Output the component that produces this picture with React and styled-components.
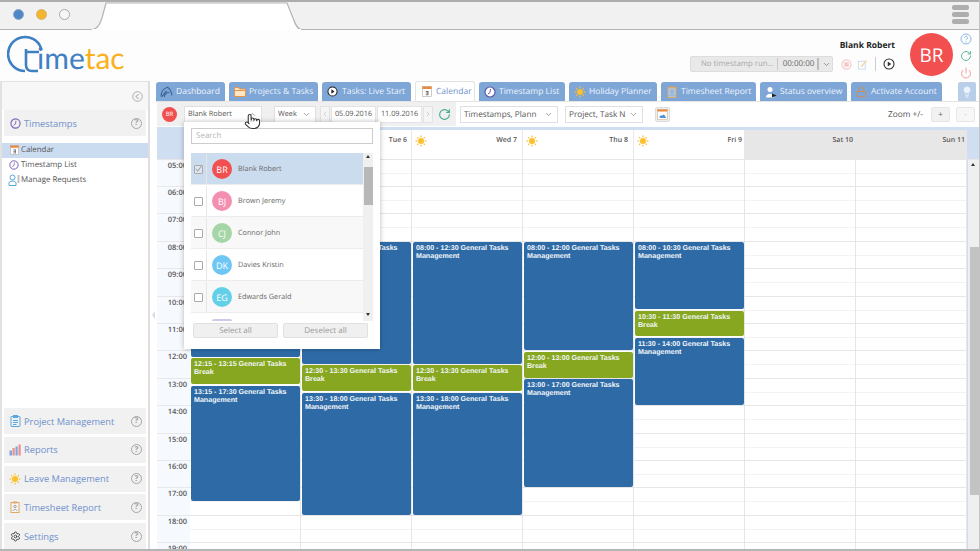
import React from 'react';
import styled, { createGlobalStyle } from 'styled-components';
import { Pointer, ChevronDown, ChevronUp, ChevronLeft, ChevronRight, RotateCw, Power, Settings, Lightbulb, Lock } from 'lucide-react';

const Global = createGlobalStyle`
  html, body { margin: 0; padding: 0; background: #fff; }
  * { box-sizing: border-box; }
  body { font-family: "Open Sans", "Liberation Sans", sans-serif; text-rendering: geometricPrecision; }
`;
const Page = styled.div`position: relative; width: 980px; height: 551px; overflow: hidden; background: #fff; display: flex; flex-direction: column; border-right: 1px solid #c4c4c4; border-bottom: 2px solid #b5b5b5;`;
const Chrome = styled.div`position: relative; height: 30px; flex: none; background: #f1f1f1; border-top: 2px solid #adadad; border-bottom: 1px solid #b4b4b4; display: flex; align-items: center; justify-content: space-between; padding: 0 10px 2px 13px;`;
const Dots = styled.div`display: flex; gap: 12px; position: relative; z-index: 1;`;
const Dot = styled.span`width: 11px; height: 11px; border-radius: 50%; background: ${p => p.$c}; border: 1px solid ${p => p.$b};`;
const TabShape = styled.svg`position: absolute; left: 88px; top: -2px;`;
const Burger = styled.div`display: flex; flex-direction: column; gap: 2px;`;
const BurgerBar = styled.span`width: 17px; height: 5px; border-radius: 2px; background: #aeaeae;`;
const Header = styled.header`height: 51px; flex: none; display: flex; align-items: flex-start; background: #fdfdfd; position: relative;`;
const Logo = styled.div`position: relative; width: 125px; height: 40px; margin: 5px 0 0 7px; flex: none;`;
const LogoMark = styled.svg`position: absolute; left: 0; top: 0;`;
const LogoText = styled.div`position: absolute; left: 30px; top: 5px; font: 400 30px/36px "Lato", sans-serif; color: #3f80c2; white-space: nowrap;`;
const LogoTac = styled.span`color: #fbb01e;`;
const HeaderRight = styled.div`margin-left: auto; display: flex; align-items: flex-start;`;
const UserBlock = styled.div`display: flex; flex-direction: column; align-items: flex-end; margin-right: 15px; padding-top: 10px;`;
const UserName = styled.div`font-size: 8.5px; font-weight: 700; color: #222; line-height: 11px;`;
const TimerRow = styled.div`display: flex; align-items: center; margin-top: 5px; height: 16px; width: 205px;`;
const TimerBox = styled.div`width: 144px; height: 16px; background: #e9e9e9; border: 1px solid #ddd; border-radius: 2px; display: flex; align-items: center; font-size: 7.8px; color: #a8a8a8; padding-left: 10px; white-space: nowrap;`;
const TimerTime = styled.span`color: #666; border-left: 1px solid #c8c8c8; border-right: 2px solid #bbb; padding: 0 3px 0 5px; margin-left: 3px; line-height: 12px; font-size: 8px;`;
const TimerActions = styled.div`display: flex; align-items: center; gap: 5px; margin-left: 8px; height: 16px;`;
const Sep = styled.span`width: 1px; height: 14px; background: #ccc; margin: 0 2px;`;
const BigAvatar = styled.div`width: 43px; height: 43px; margin-top: 3px; border-radius: 50%; background: #f25050; color: #fff; font-size: 19px; display: flex; align-items: center; justify-content: center; flex: none;`;
const SideIcons = styled.div`width: 26px; display: flex; flex-direction: column; align-items: center; gap: 5px; padding: 3px 0 0; flex: none;`;
const Body = styled.div`flex: 1; display: flex; min-height: 0;`;
const Sidebar = styled.aside`width: 150px; flex: none; border-right: 2px solid #dedede; border-left: 2px solid #e2e2e2; border-top: 1px solid #e2e2e2; display: flex; flex-direction: column; background: #fff;`;
const Collapse = styled.div`height: 28px; flex: none; background: #f7f7f7; display: flex; align-items: center; justify-content: flex-end; padding-right: 5px;`;
const SideSection = styled.div`height: 26px; flex: none; margin: 0 2px 2.75px 2px; background: #f1f1f1; display: flex; align-items: center; gap: 3px; padding: 0 4px 0 5px; color: #6f90cc; font-size: 9.3px; &:last-child { margin-bottom: 0; }`;
const SideIconSlot = styled.span`width: 12px; flex: none; display: flex; align-items: center; justify-content: center;`;
const SideLabel = styled.span`flex: 1; white-space: nowrap;`;
const SideList = styled.div`margin: 4px 0 0; flex: 1;`;
const SideItem = styled.div`height: 15px; display: flex; align-items: center; gap: 1px; padding-left: 6px; font-size: 7.9px; color: #555; background: ${p => p.$active ? '#ccdcf0' : 'transparent'}; white-space: nowrap;`;
const HelpCircle = styled.span`width: 11px; height: 11px; border: 1.3px solid #a5a5a5; border-radius: 50%; color: #a0a0a0; font-size: 8px; font-weight: 700; display: flex; align-items: center; justify-content: center; flex: none; line-height: 1;`;
const Main = styled.main`flex: 1; min-width: 0; display: flex; flex-direction: column; padding-left: 6px; position: relative;`;
const Tabs = styled.nav`height: 20px; flex: none; display: flex; gap: 4px; align-items: flex-end; position: relative;`;
const Tab = styled.div`height: ${p => p.$active ? 20 : 19}px; width: ${p => p.$w}px; flex: none; border-radius: 3px 3px 0 0; background: ${p => p.$active ? '#fff' : '#7ea6d7'}; border: ${p => p.$active ? '1px solid #e2e2e2' : 'none'}; border-bottom: none; color: ${p => p.$active ? '#6f90cc' : '#eef4fb'}; font-size: 8.5px; display: flex; align-items: center; gap: 4px; padding-left: 5px; white-space: nowrap;`;
const TabIcon = styled.span`width: 11px; flex: none; display: flex; align-items: center; justify-content: center;`;
const BulbTab = styled.div`width: 18px; height: 19px; margin-left: 12px; background: #b9cfe9; border-radius: 2px 2px 0 0; display: flex; align-items: center; justify-content: center;`;
const Toolbar = styled.div`height: 26px; flex: none; display: flex; align-items: center; padding: 0 4px 1px 1px; border-top: 1px solid #e4e4e4; position: relative; background: #fff;`;
const ToolGroup = styled.div`display: flex; align-items: center; height: 24px; background: #f0f0f0; padding: 0 3px 0 5px; width: 299px; flex: none;`;
const SmallAvatar = styled.div`width: 15px; height: 15px; border-radius: 50%; background: #f25050; color: #fff; font-size: 6px; display: flex; align-items: center; justify-content: center; flex: none; margin-right: 7px;`;
const Select = styled.div`width: ${p => p.$w}px; height: 17px; flex: none; margin-left: ${p => p.$ml || 0}px; background: #fff; border: 1px solid #e0e0e0; display: flex; align-items: center; justify-content: space-between; padding: 0 4px 0 3px; font-size: ${p => p.$fs || 7.3}px; color: #555; white-space: nowrap; overflow: hidden;`;
const SelectText = styled.span`overflow: hidden; flex: 1;`;
const ArrowBtn = styled.div`width: 10px; height: 17px; flex: none; margin: 0 1px 0 ${p => p.$ml || 1}px; background: #f5f5f5; border: 1px solid #e2e2e2; display: flex; align-items: center; justify-content: center;`;
const DateBox = styled.div`width: 45px; height: 17px; flex: none; margin-left: ${p => p.$ml || 0}px; background: #fff; border: 1px solid #e4e4e4; font-size: 7.3px; color: #555; display: flex; align-items: center; justify-content: center;`;
const RefreshSlot = styled.span`margin-left: 4px; display: flex;`;
const ExportBtn = styled.div`width: 15px; height: 15px; margin-left: 12px; background: #eee; border: 1px solid #ddd; border-radius: 2px; display: flex; align-items: center; justify-content: center;`;
const ZoomLabel = styled.div`margin-left: auto; font-size: 8.3px; color: #555; margin-right: 8px;`;
const ZoomBtn = styled.div`width: 19px; height: 15px; background: ${p => p.$off ? '#f7f7f7' : '#f1f1f1'}; border: 1px solid #e6e6e6; border-radius: 2px; margin-left: ${p => p.$ml || 0}px; color: ${p => p.$off ? '#bbb' : '#666'}; font-size: 8px; display: flex; align-items: center; justify-content: center;`;
const Calendar = styled.div`flex: 1; min-height: 0; display: flex; flex-direction: column; border-top: 3px solid #cfdff1; margin-left: 1px; margin-right: -5px;`;
const DayHead = styled.div`height: 29.5px; flex: none; display: flex; border-bottom: 1px solid #e6e6e6;`;
const CornerCell = styled.div`width: 33px; flex: none; background: #cfdff1;`;
const HeadCell = styled.div`width: 111px; flex: none; border-right: 1px solid #e8e8e8; background: ${p => p.$off ? '#e7e7e7' : '#fff'}; display: flex; justify-content: space-between; padding: 5px ${p => p.$pr}px 0 3px; font-size: 7px; line-height: 11px; font-weight: 600; color: #555;`;
const HeadFill = styled.div`flex: 1; background: #cfdff1;`;
const GridWrap = styled.div`flex: 1; min-height: 0; display: flex; overflow: hidden;`;
const TimeCol = styled.div`width: 33px; flex: none; background: #f6f9fe;`;
const TimeCell = styled.div`height: 27.42px; border-bottom: 1px solid #e8e8e8; text-align: right; padding: 1px 3px 0 0; font-size: 7.5px; font-weight: 600; color: #555; line-height: 11px;`;
const DayCol = styled.div`position: relative; width: 111px; flex: none; border-right: 1px solid #e6e6e6;`;
const Slot = styled.div`height: 27.42px; border-bottom: 1px solid #e6e6e6; background: linear-gradient(#f3f3f3, #f3f3f3) 0 13px / 100% 1px no-repeat;`;
const Event = styled.div`position: absolute; left: 1px; right: 0; background: ${p => p.$break ? '#86a71f' : '#2e6ba6'}; border-radius: 2px; color: #f4f7fb; font: 700 7.1px/8px "Liberation Sans", sans-serif; padding: 2px 3px; white-space: pre-line; overflow: hidden;`;
const Scrollbar = styled.div`width: 12px; flex: none; background: #efefef; border-left: 1px solid #cfdff1; position: relative;`;
const ScrollThumb = styled.div`position: absolute; left: 2px; right: 0; top: 87px; height: 248px; background: #c3c3c3;`;
const Tri = styled.span`position: absolute; left: 3px; top: ${p => p.$top}px; width: 0; height: 0; border-left: 2.5px solid transparent; border-right: 2.5px solid transparent; border-${p => p.$down ? 'top' : 'bottom'}: 3px solid #333;`;
const Dropdown = styled.div`position: absolute; left: 184px; top: 122px; width: 196px; height: 227px; background: #fff; box-shadow: 0 0 5px rgba(0,0,0,.28); padding: 6px 7px 0 7px; z-index: 5; display: flex; flex-direction: column;`;
const SearchBox = styled.div`height: 16px; flex: none; border: 1px solid #ccc; padding-left: 4px; font-size: 8px; line-height: 14px; color: #b5b5b5;`;
const ListWrap = styled.div`height: 168px; flex: none; margin-top: 9px; position: relative; overflow: hidden; padding-right: 10px;`;
const PersonRow = styled.div`height: 32px; padding-top: 1px; display: flex; align-items: center; background: ${p => p.$sel ? '#ccdcef' : (p.$alt ? '#f8f8f8' : '#fff')}; border-bottom: 1px solid #ececec; font-size: 7.25px; color: #666;`;
const CheckCell = styled.div`width: 16px; height: 100%; flex: none; border-right: 1px solid #e6e6e6; display: flex; align-items: center; justify-content: center; margin-right: 5px;`;
const Check = styled.span`width: 9px; height: 9px; border: 1px solid #aaa; border-radius: 1px; background: ${p => p.$on ? '#dde4ee' : '#fff'}; display: flex; align-items: center; justify-content: center;`;
const PersonAvatar = styled.span`width: 20px; height: 20px; border-radius: 50%; background: ${p => p.$c}; color: #fff; font-size: 9px; display: flex; align-items: center; justify-content: center; margin-right: 6px; flex: none;`;
const ListScroll = styled.div`position: absolute; right: 0; top: 0; width: 10px; height: 100%; background: #f0f0f0;`;
const ListThumb = styled.div`position: absolute; left: 1px; right: 0; top: 14px; height: 38px; background: #b8b8b8;`;
const PartialRow = styled.div`height: 8px; padding-left: 21px; display: flex; align-items: flex-end; overflow: hidden;`;
const PartialAvatar = styled.span`width: 20px; height: 2px; border-radius: 10px 10px 0 0; background: #cfc8e6;`;
const DropActions = styled.div`display: flex; justify-content: space-between; padding: 2px 5px 0 2px;`;
const DropBtn = styled.div`width: 85px; height: 15px; background: #f0f0f0; border: 1px solid #e0e0e0; border-radius: 2px; font-size: 8px; color: #999; display: flex; align-items: center; justify-content: center;`;
const Cursor = styled.div`position: absolute; left: 244px; top: 113px; z-index: 6; line-height: 0;`;
const SideNotch = styled.span`position: absolute; left: 152px; top: 311px; width: 0; height: 0; border-top: 4px solid transparent; border-bottom: 4px solid transparent; border-right: 3px solid #dcdcdc;`;

const SunIcon = ({ s = 11 }) => (
  <svg width={s} height={s} viewBox="0 0 24 24" style={{ flex: 'none' }}>
    <circle cx="12" cy="12" r="6" fill="#fbc02d" />
    {Array.from({ length: 8 }, (_, i) => (
      <line key={i} x1="12" y1="1" x2="12" y2="4.5" stroke="#fbc02d" strokeWidth="2.4" transform={`rotate(${i * 45} 12 12)`} />
    ))}
  </svg>
);
const ClockIcon = ({ s = 11, c = '#7a63b8', fill = 'none' }) => (
  <svg width={s} height={s} viewBox="0 0 24 24" fill={fill} style={{ flex: 'none' }}>
    <circle cx="12" cy="12" r="10" stroke={c} strokeWidth="2.4" />
    <path d="M13 6l-1 7-4 3" stroke={c} strokeWidth="2" fill="none" />
  </svg>
);
const CalIcon = ({ s = 10 }) => (
  <svg width={s} height={s + 1} viewBox="0 0 20 22" style={{ flex: 'none' }}>
    <rect x="1" y="1" width="18" height="20" fill="#fff" stroke="#999" />
    <rect x="1" y="1" width="18" height="5" fill="#e9873a" />
    <rect x="7.5" y="10" width="5" height="1.6" fill="#555" />
    <rect x="11" y="10" width="1.6" height="8" fill="#555" />
    <rect x="7.5" y="13.4" width="5" height="1.4" fill="#555" />
    <rect x="7.5" y="17" width="5" height="1.4" fill="#555" />
  </svg>
);
const GaugeIcon = () => (
  <svg width="13" height="13" viewBox="0 0 24 24" fill="none" stroke="#3d6490" strokeWidth="2" style={{ flex: 'none' }}>
    <path d="M2 21A17 17 0 0 1 14 4c4 3 7 9 8 15" /><path d="M3 22l9-11M8 22a8 8 0 0 1 9-8" />
  </svg>
);
const FolderIcon = () => (
  <svg width="12" height="11" viewBox="0 0 24 22" style={{ flex: 'none' }}>
    <path d="M1 3h8l2 3h12v15H1z" fill="#fde7c7" stroke="#e8944a" strokeWidth="2" /><rect x="1" y="8" width="22" height="2" fill="#e8944a" />
  </svg>
);
const PlayCircle = ({ s = 11, c = '#222' }) => (
  <svg width={s} height={s} viewBox="0 0 24 24" fill="none" style={{ flex: 'none' }}>
    <circle cx="12" cy="12" r="10" stroke={c} strokeWidth="2.2" fill="#fff" /><path d="M9.5 7l7 5-7 5z" fill={c} />
  </svg>
);
const Clipboard = ({ c = '#e0a860', inner = '#7fa6d7', s = 12 }) => (
  <svg width={s} height={s} viewBox="0 0 24 24" fill="none" style={{ flex: 'none' }}>
    <rect x="4" y="3" width="16" height="20" fill="#fff" fillOpacity=".35" stroke={c} strokeWidth="2" />
    <rect x="8" y="1" width="8" height="4" fill={c} />
    <circle cx="12" cy="11" r="2.5" stroke={inner} strokeWidth="1.6" /><path d="M8 20c0-4 8-4 8 0" stroke={inner} strokeWidth="1.6" />
  </svg>
);
const ProjectIcon = () => (
  <svg width="11" height="12" viewBox="0 0 22 24" fill="none" stroke="#5aa6de" strokeWidth="2" style={{ flex: 'none' }}>
    <rect x="2" y="3" width="18" height="20" rx="1" /><rect x="7" y="1" width="8" height="4" fill="#5aa6de" />
    <path d="M6 11h10M6 15h10M6 19h7" />
  </svg>
);
const ReportIcon = () => (
  <svg width="12" height="12" viewBox="0 0 24 24" style={{ flex: 'none' }}>
    <rect x="1" y="13" width="5" height="10" fill="#7fa9dc" /><rect x="7" y="8" width="4.5" height="15" fill="#ef8f8f" />
    <rect x="13" y="5" width="4.5" height="18" fill="#7fa9dc" /><rect x="19" y="1" width="4.5" height="22" fill="#ef8f8f" />
  </svg>
);
const PeopleIcon = () => (
  <svg width="12" height="12" viewBox="0 0 24 24" fill="none" style={{ flex: 'none' }}>
    <circle cx="9" cy="7" r="5" stroke="#5aa6de" strokeWidth="2" /><path d="M2 23v-5c0-5 14-5 14 0v5z" stroke="#5aa6de" strokeWidth="2" />
    <path d="M19 4h4M19 8h4M19 12h4M19 16h4" stroke="#777" strokeWidth="1.8" />
  </svg>
);
const StatusIcon = () => (
  <svg width="12" height="12" viewBox="0 0 24 24" style={{ flex: 'none' }}>
    <circle cx="10" cy="7" r="5" fill="#fff" /><path d="M2 23c0-10 16-10 16 0z" fill="#fff" /><path d="M14 15l9 4-9 4z" fill="#222" />
  </svg>
);
const ExportIcon = () => (
  <svg width="11" height="11" viewBox="0 0 22 22" style={{ flex: 'none' }}>
    <rect x="1" y="1" width="20" height="20" fill="#fff" stroke="#c9a37c" /><rect x="1" y="1" width="20" height="4" fill="#e9873a" />
    <path d="M6 18c-3-3 1-6 4-5 2-3 7-1 6 2 3 0 3 3 1 3z" fill="#4f93cf" />
  </svg>
);

const tabs = [
  ['Dashboard', 69, <GaugeIcon />], ['Projects & Tasks', 89, <FolderIcon />], ['Tasks: Live Start', 89, <PlayCircle />],
  ['Calendar', 60, <CalIcon s={10} />, true], ['Timestamp List', 86, <ClockIcon s={12} c="#5f5aa8" fill="#fff" />],
  ['Holiday Planner', 88, <SunIcon s={12} />], ['Timesheet Report', 95, <Clipboard />], ['Status overview', 87, <StatusIcon />],
  ['Activate Account', 91, <Lock size={12} color="#d98a4a" strokeWidth={2} />],
];
const bottomSections = [
  ['Project Management', <ProjectIcon />], ['Reports', <ReportIcon />], ['Leave Management', <SunIcon s={12} />],
  ['Timesheet Report', <Clipboard c="#e0a860" inner="#8a8a8a" />], ['Settings', <Settings size={11} color="#444" strokeWidth={2} />],
];
const hours = ['05:00','06:00','07:00','08:00','09:00','10:00','11:00','12:00','13:00','14:00','15:00','16:00','17:00','18:00','19:00'];
const HOUR = 27.42;
const ev = (from, to, task) => ({ from, to, task, isBreak: task === 'Break' });
const fmt = h => `${String(Math.floor(h)).padStart(2, '0')}:${String(Math.round((h % 1) * 60)).padStart(2, '0')}`;
const M = 'Management', B = 'Break';
const days = [
  { id: 'mon', pr: 4, sun: true, events: [ev(8, 12.25, M), ev(12.25, 13.25, B), ev(13.25, 17.5, M)], hiddenFirst: true },
  { id: 'tue', pr: 4, head: 'Tue 6', sun: true, events: [ev(8, 12.5, M), ev(12.5, 13.5, B), ev(13.5, 18, M)] },
  { id: 'wed', pr: 5, head: 'Wed 7', sun: true, events: [ev(8, 12.5, M), ev(12.5, 13.5, B), ev(13.5, 18, M)] },
  { id: 'thu', pr: 5, head: 'Thu 8', sun: true, events: [ev(8, 12, M), ev(12, 13, B), ev(13, 17, M)] },
  { id: 'fri', pr: 2, head: 'Fri 9', sun: true, events: [ev(8, 10.5, M), ev(10.5, 11.5, B), ev(11.5, 14, M)] },
  { id: 'sat', pr: 2, head: 'Sat 10', off: true, events: [] },
  { id: 'sun', pr: 1, head: 'Sun 11', off: true, events: [] },
];
const people = [
  ['BR', 'Blank Robert', '#f25050', true], ['BJ', 'Brown Jeremy', '#f48fb1'], ['CJ', 'Connor John', '#a5d6a7'],
  ['DK', 'Davies Kristin', '#6ec6f5'], ['EG', 'Edwards Gerald', '#62d0e8'],
];

export default function App() {
  return (
    <Page>
      <Global />
      <Chrome>
        <TabShape width="220" height="30" viewBox="0 0 220 30">
          <path d="M3 30C10 29 12 24 14 18L18 3H199L205 18C207 24 209 29 214 30" fill="#fff" stroke="#b4b4b4" strokeWidth="1.2" />
          <rect x="4" y="29" width="209" height="2" fill="#fff" />
        </TabShape>
        <Dots>
          <Dot $c="#4f86c6" $b="#8fa9c9" /><Dot $c="#f4b630" $b="#d9b56a" /><Dot $c="#f8f8f8" $b="#a8a8a8" />
        </Dots>
        <Burger><BurgerBar /><BurgerBar /><BurgerBar /></Burger>
      </Chrome>
      <Header>
        <Logo>
          <LogoMark width="40" height="40" viewBox="0 0 40 40" fill="none">
            <path d="M34 13A17 17 0 1 0 18 36" stroke="#3f80c2" strokeWidth="2.6" />
            <path d="M19 14V30c0 4 2 6 6 6h6M19 17H32" stroke="#3f80c2" strokeWidth="2.6" />
          </LogoMark>
          <LogoText>ime<LogoTac>tac</LogoTac></LogoText>
        </Logo>
        <HeaderRight>
          <UserBlock>
            <UserName>Blank Robert</UserName>
            <TimerRow>
              <TimerBox>No timestamp run...<TimerTime>00:00:00</TimerTime><ChevronDown size={9} color="#777" style={{ marginLeft: 3 }} /></TimerBox>
              <TimerActions>
                <svg width="11" height="11" viewBox="0 0 24 24" fill="none"><circle cx="12" cy="12" r="10" stroke="#f6c9c9" strokeWidth="2.4" /><rect x="7" y="7" width="10" height="10" fill="#f6c9c9" /></svg>
                <svg width="11" height="11" viewBox="0 0 24 24" fill="none"><rect x="3" y="5" width="15" height="17" stroke="#c5daf0" strokeWidth="2" /><path d="M9 17L21 3" stroke="#f1d79c" strokeWidth="3" /></svg>
                <Sep />
                <PlayCircle s={12} c="#333" />
              </TimerActions>
            </TimerRow>
          </UserBlock>
          <BigAvatar>BR</BigAvatar>
          <SideIcons>
            <svg width="12" height="12" viewBox="0 0 24 24" fill="none"><circle cx="12" cy="12" r="10" stroke="#8ab8e8" strokeWidth="2" /><path d="M9 9.5a3 3 0 1 1 4.5 2.6c-1 .6-1.5 1.2-1.5 2.4M12 17v2" stroke="#8ab8e8" strokeWidth="2" /></svg>
            <RotateCw size={12} color="#5fb5a0" strokeWidth={2} />
            <Power size={12} color="#f0a0a0" strokeWidth={2} />
          </SideIcons>
        </HeaderRight>
      </Header>
      <Body>
        <Sidebar>
          <Collapse>
            <svg width="11" height="11" viewBox="0 0 24 24" fill="none"><circle cx="12" cy="12" r="10.5" stroke="#aaa" strokeWidth="2" fill="#f4f4f4" /><path d="M14 7l-5 5 5 5" stroke="#888" strokeWidth="2" /></svg>
          </Collapse>
          <SideSection>
            <SideIconSlot><ClockIcon s={11} /></SideIconSlot><SideLabel>Timestamps</SideLabel><HelpCircle>?</HelpCircle>
          </SideSection>
          <SideList>
            <SideItem $active><SideIconSlot><CalIcon s={9} /></SideIconSlot>Calendar</SideItem>
            <SideItem><SideIconSlot><ClockIcon s={10} /></SideIconSlot>Timestamp List</SideItem>
            <SideItem><SideIconSlot><PeopleIcon /></SideIconSlot>Manage Requests</SideItem>
          </SideList>
          {bottomSections.map(([label, icon]) => (
            <SideSection key={label}><SideIconSlot>{icon}</SideIconSlot><SideLabel>{label}</SideLabel><HelpCircle>?</HelpCircle></SideSection>
          ))}
        </Sidebar>
        <Main>
          <Tabs>
            {tabs.map(([label, w, icon, active]) => (
              <Tab key={label} $w={w} $active={active}><TabIcon>{icon}</TabIcon>{label}</Tab>
            ))}
            <BulbTab><Lightbulb size={12} color="#eef4fb" fill="#eef4fb" /></BulbTab>
          </Tabs>
          <Toolbar>
            <ToolGroup>
              <SmallAvatar>BR</SmallAvatar>
              <Select $w={78}><SelectText>Blank Robert</SelectText><ChevronUp size={9} color="#888" /></Select>
              <Select $w={42} $ml={12}><SelectText>Week</SelectText><ChevronDown size={9} color="#888" /></Select>
              <ArrowBtn $ml={4}><ChevronLeft size={8} color="#aaa" strokeWidth={1.5} /></ArrowBtn>
              <DateBox>05.09.2016</DateBox>
              <DateBox $ml={1}>11.09.2016</DateBox>
              <ArrowBtn><ChevronRight size={8} color="#aaa" strokeWidth={1.5} /></ArrowBtn>
              <RefreshSlot><RotateCw size={13} color="#45a98f" strokeWidth={2} /></RefreshSlot>
            </ToolGroup>
            <Select $w={98} $ml={4} $fs={8.2}><SelectText>Timestamps, Plann</SelectText><ChevronDown size={9} color="#888" /></Select>
            <Select $w={78} $ml={7} $fs={8.2}><SelectText>Project, Task N</SelectText><ChevronDown size={9} color="#888" /></Select>
            <ExportBtn><ExportIcon /></ExportBtn>
            <ZoomLabel>Zoom +/-</ZoomLabel>
            <ZoomBtn>+</ZoomBtn>
            <ZoomBtn $off $ml={6}>-</ZoomBtn>
          </Toolbar>
          <Calendar>
            <DayHead>
              <CornerCell />
              {days.map(d => (
                <HeadCell key={d.id} $off={d.off} $pr={d.pr}>{d.sun ? <SunIcon s={12} /> : <span />}{d.head && <span>{d.head}</span>}</HeadCell>
              ))}
              <HeadFill />
            </DayHead>
            <GridWrap>
              <TimeCol>{hours.map(h => <TimeCell key={h}>{h}</TimeCell>)}</TimeCol>
              {days.map(d => (
                <DayCol key={d.id}>
                  {hours.map(h => <Slot key={h} />)}
                  {d.events.map((e, i) => (
                    <Event key={e.from} $break={e.isBreak} style={{ top: (e.from - 5) * HOUR + 0.2, height: (e.to - e.from) * HOUR - 1.5 }}>
                      {d.hiddenFirst && i === 0 ? null : `${fmt(e.from)} - ${fmt(e.to)} General Tasks\n${e.task}`}
                    </Event>
                  ))}
                </DayCol>
              ))}
              <Scrollbar><Tri $top={3} /><ScrollThumb /></Scrollbar>
            </GridWrap>
          </Calendar>
        </Main>
      </Body>
      <SideNotch />
      <Dropdown>
        <SearchBox>Search</SearchBox>
        <ListWrap>
          {people.map(([ini, name, c, sel], i) => (
            <PersonRow key={ini} $sel={sel} $alt={i % 2 === 0}>
              <CheckCell><Check $on={sel}>{sel && <svg width="8" height="8" viewBox="0 0 10 10" fill="none"><path d="M1 5l3 3 5-7" stroke="#888" strokeWidth="1.2" /></svg>}</Check></CheckCell>
              <PersonAvatar $c={c}>{ini}</PersonAvatar>{name}
            </PersonRow>
          ))}
          <PartialRow><PartialAvatar /></PartialRow>
          <ListScroll><Tri $top={2} /><ListThumb /><Tri $down $top={160} /></ListScroll>
        </ListWrap>
        <DropActions><DropBtn>Select all</DropBtn><DropBtn>Deselect all</DropBtn></DropActions>
      </Dropdown>
      <Cursor><Pointer size={17} color="#333" fill="#fff" strokeWidth={1.5} /></Cursor>
    </Page>
  );
}
